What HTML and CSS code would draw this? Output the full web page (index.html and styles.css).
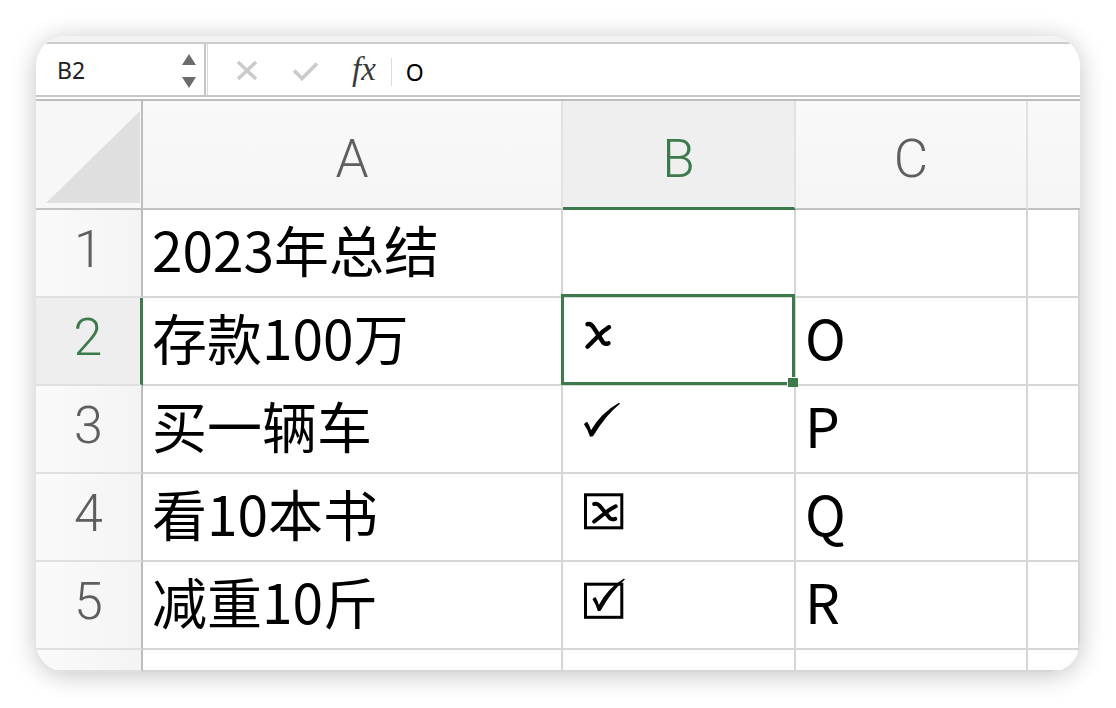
FILE: index.html
```html
<!DOCTYPE html>
<html lang="zh">
<head>
<meta charset="utf-8">
<title>Sheet</title>
<link rel="stylesheet" href="styles.css">
</head>
<body>
<div class="page">
  <div class="card">
    <div class="topstrip"></div>
    <div class="fbar">
      <div class="namebox">
        <span class="ref">B2</span>
        <svg class="spin" width="14" height="34" viewBox="0 0 14 34"><path d="M0,11 L7,0 L14,11 Z M0,23 L14,23 L7,34 Z" fill="#6b6b6b"/></svg>
      </div>
      <div class="formula">
        <svg class="tool-x" width="22" height="21" viewBox="0 0 22 21"><path d="M2,2 L20,19 M20,2 L2,19" stroke="#cbcbcb" stroke-width="3.6" fill="none"/></svg>
        <svg class="tool-ok" width="27" height="20" viewBox="0 0 27 20"><path d="M2,9.5 L10,17.5 L25,2.5" stroke="#cbcbcb" stroke-width="3.8" fill="none"/></svg>
        <span class="fx">fx</span>
        <span class="sep"></span>
        <div class="input">O</div>
      </div>
    </div>
    <div class="gap"></div>
    <div class="sheet">
      <div class="corner"><svg width="94" height="92" viewBox="0 0 94 92"><path d="M0,92 L94,92 L94,0 Z" fill="#dfdfdf"/></svg></div>
      <div class="ch">A</div>
      <div class="ch ch-sel">B</div>
      <div class="ch">C</div>
      <div class="ch ch-last"></div>

      <div class="rh">1</div>
      <div class="cell">2023年总结</div>
      <div class="cell"></div>
      <div class="cell"></div>
      <div class="cell"></div>

      <div class="rh rh-sel">2</div>
      <div class="cell">存款100万</div>
      <div class="cell sym sel-cell">
        <svg width="48" height="60" viewBox="0 0 48 60"><g transform="translate(3,15.7)" fill="none" stroke="#000" stroke-width="4.4" stroke-linecap="round"><path d="M2.5,2.5 Q6,1.5 9,6.5 L17,19 Q19.5,23.5 23.5,21.5"/><path d="M24,5.5 Q17.5,9.5 11.5,16 Q6,21.5 2.5,25"/></g></svg>
        <span class="selbox"></span>
        <span class="handle"></span>
      </div>
      <div class="cell">O</div>
      <div class="cell"></div>

      <div class="rh">3</div>
      <div class="cell">买一辆车</div>
      <div class="cell sym">
        <svg width="48" height="60" viewBox="0 0 48 60"><path transform="translate(2,8.7)" d="M0,21.5 Q2,19 3.5,19.5 Q5.5,22.5 7,27.5 Q17,10 35,0 L36,1 Q22,12 9,33.5 L6,34 Q4,27 0,21.5 Z" fill="#000"/></svg>
      </div>
      <div class="cell">P</div>
      <div class="cell"></div>

      <div class="rh">4</div>
      <div class="cell">看10本书</div>
      <div class="cell sym">
        <svg width="48" height="60" viewBox="0 0 48 60"><rect x="3.5" y="12.8" width="36.3" height="33" fill="none" stroke="#000" stroke-width="3"/><g transform="translate(9.7,20) scale(1,0.78)" fill="none" stroke="#000" stroke-width="4" stroke-linecap="round"><path vector-effect="non-scaling-stroke" d="M2.5,2.5 Q6,1.5 9,6.5 L17,19 Q19.5,23.5 23.5,21.5"/><path vector-effect="non-scaling-stroke" d="M24,5.5 Q17.5,9.5 11.5,16 Q6,21.5 2.5,25"/></g></svg>
      </div>
      <div class="cell">Q</div>
      <div class="cell"></div>

      <div class="rh">5</div>
      <div class="cell">减重10斤</div>
      <div class="cell sym">
        <svg width="48" height="60" viewBox="0 0 48 60"><rect x="3.5" y="14.2" width="36.3" height="33.1" fill="none" stroke="#000" stroke-width="3"/><path transform="translate(10.5,8.5) scale(0.9,0.96)" d="M0,21.5 Q2,19 3.5,19.5 Q5.5,22.5 7,27.5 Q17,10 35,0 L36,1 Q22,12 9,33.5 L6,34 Q4,27 0,21.5 Z" fill="#000"/></svg>
      </div>
      <div class="cell">R</div>
      <div class="cell"></div>

      <div class="rh"></div>
      <div class="cell"></div>
      <div class="cell"></div>
      <div class="cell"></div>
      <div class="cell"></div>
    </div>
  </div>
</div>
</body>
</html>
```
FILE: styles.css
```css
html, body {
  margin: 0;
  padding: 0;
  background: #ffffff;
}
body {
  width: 1116px;
  height: 708px;
  overflow: hidden;
}
.page {
  padding: 36px;
}
.card {
  width: 1044px;
  height: 636px;
  border-radius: 30px;
  background: #ffffff;
  box-shadow: 0 3px 26px rgba(0, 0, 0, 0.24);
  overflow: hidden;
  display: flex;
  flex-direction: column;
}
.topstrip {
  height: 6px;
  background: #f3f3f3;
  border-bottom: 2px solid #cdcdcd;
  flex: none;
}
.fbar {
  height: 53px;
  box-sizing: border-box;
  border-bottom: 2px solid #c6c6c6;
  display: flex;
  flex: none;
}
.namebox {
  width: 170px;
  box-sizing: border-box;
  border-right: 2px solid #c4c4c4;
  display: flex;
  align-items: center;
  padding-left: 21px;
  padding-right: 8px;
  background: #fff;
}
.ref {
  font: 23px/1 "Noto Sans", "Open Sans", sans-serif;
  color: #222;
  padding-top: 2px;
}
.spin {
  margin-left: auto;
  margin-top: 2px;
}
.formula {
  flex: 1;
  margin-left: 1px;
  border-left: 1px solid #d9d9d9;
  display: flex;
  align-items: center;
  padding-left: 28px;
  background: #fff;
}
.tool-x {
  margin-top: 2px;
}
.tool-ok {
  margin-left: 34px;
  margin-top: 2px;
}
.fx {
  margin-left: 33px;
  font: italic 33px/1 "Liberation Serif", "DejaVu Serif", serif;
  color: #3a3a3a;
}
.sep {
  width: 1px;
  height: 28px;
  background: #dcdcdc;
  margin-left: 15px;
  margin-top: 4px;
}
.input {
  margin-left: 14px;
  font: 23px/1 "Noto Sans", "Open Sans", sans-serif;
  color: #000;
  padding-top: 5px;
}
.gap {
  height: 2px;
  border-bottom: 2px solid #bdbdbd;
  flex: none;
}
.sheet {
  flex: 1;
  display: grid;
  grid-template-columns: 107px 420px 233px 232px 1fr;
  grid-template-rows: 109px repeat(5, 88px) 1fr;
}
.sheet > div {
  box-sizing: border-box;
  border-right: 2px solid #d6d6d6;
  border-bottom: 2px solid #d6d6d6;
  min-width: 0;
}
.corner {
  background: #f7f7f7;
  border-right-color: #bdbdbd !important;
  border-bottom-color: #c2c2c2 !important;
  display: flex;
  align-items: flex-end;
  justify-content: flex-end;
  padding: 0 1px 5px 0;
}
.ch {
  background: linear-gradient(#f9f9f9, #f5f5f5);
  border-right-color: #e2e2e2 !important;
  border-bottom-color: #c2c2c2 !important;
  display: flex;
  align-items: center;
  justify-content: center;
  font: 300 53px/1 Roboto, "Liberation Sans", sans-serif;
  color: #5e5e5e;
  padding-top: 10px;
}
.ch-sel {
  background: #efefef;
  color: #3c7a4c;
  border-bottom: 3px solid #3c7a4c !important;
  padding-top: 11px;
}
.ch-last {
  border-right: none !important;
}
.rh {
  background: linear-gradient(90deg, #fafafa, #f4f4f4);
  border-right-color: #bdbdbd !important;
  border-bottom-color: #e0e0e0 !important;
  display: flex;
  align-items: center;
  justify-content: center;
  font: 300 52px/1 Roboto, "Liberation Sans", sans-serif;
  color: #5e5e5e;
  padding-bottom: 6px;
}
.rh-sel {
  background: #eeeeee;
  color: #3c7a4c;
  border-right: 3px solid #3c7a4c !important;
}
.cell {
  background: #fff;
  display: flex;
  align-items: center;
  padding-left: 9px;
  padding-bottom: 10px;
  font: 400 55px/1 "Noto Sans CJK SC", "Noto Sans", sans-serif;
  color: #000;
  white-space: nowrap;
}
.sym {
  padding-left: 19px;
  padding-bottom: 10px;
}
.sym svg {
  display: block;
  flex: none;
}
.sel-cell {
  position: relative;
}
.selbox {
  position: absolute;
  left: -2px;
  top: -4px;
  right: -1px;
  bottom: -1px;
  border: 3px solid #3c7a4c;
  box-sizing: border-box;
}
.handle {
  position: absolute;
  right: -4px;
  bottom: -3px;
  width: 10px;
  height: 9px;
  background: #3c7a4c;
  border-left: 1px solid #fff;
  border-top: 1px solid #fff;
}
```
